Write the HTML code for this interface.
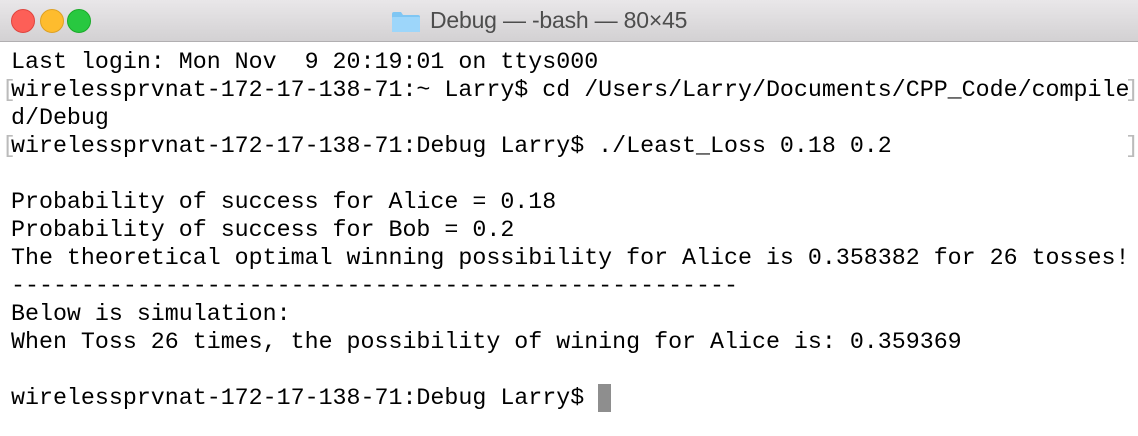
<!DOCTYPE html>
<html><head><style>
html,body{margin:0;padding:0;width:1138px;height:436px;overflow:hidden;background:#fff}
.tb{position:absolute;left:0;top:0;width:1138px;height:41px;background:linear-gradient(#e9e7e9,#d3d1d3);border-bottom:1px solid #b1afb1}
.dot{position:absolute;top:9px;width:24px;height:24px;border-radius:50%}
.title{position:absolute;top:7px;left:430px;font:23px "Liberation Sans",sans-serif;color:#4d4d4d;letter-spacing:-0.2px}
.folder{position:absolute;left:391px;top:11px;width:30px;height:22px}
pre{position:absolute;left:11px;top:48px;margin:0;font:23.3px/28px "Liberation Mono",monospace;color:#000;letter-spacing:0}
.br{position:absolute;font:23px/28px "Liberation Mono",monospace;color:#bbb}
.cur{position:absolute;left:598px;top:384px;width:13px;height:28px;background:#8e8e8e}
</style></head><body>
<div class="tb">
<div class="dot" style="left:11px;background:#fd5f57;border:1px solid #e0443e;width:22px;height:22px"></div>
<div class="dot" style="left:40px;background:#febc2e;border:1px solid #dea123;width:22px;height:22px"></div>
<div class="dot" style="left:67px;background:#28c840;border:1px solid #1aab29;width:22px;height:22px"></div>
<svg class="folder" viewBox="0 0 30 22"><path d="M1 3 Q1 1 3 1 L10 1 L12 4 L27 4 Q29 4 29 6 L29 20 Q29 21 28 21 L2 21 Q1 21 1 20Z" fill="#7fc6f3"/><rect x="1" y="6" width="28" height="15" rx="1" fill="#9dd6fa"/></svg>
<div class="title">Debug — -bash — 80×45</div>
</div>
<span class="br" style="left:2px;top:76px">[</span>
<span class="br" style="left:1125px;top:76px">]</span>
<span class="br" style="left:2px;top:132px">[</span>
<span class="br" style="left:1125px;top:132px">]</span>
<pre>Last login: Mon Nov  9 20:19:01 on ttys000
wirelessprvnat-172-17-138-71:~ Larry$ cd /Users/Larry/Documents/CPP_Code/compile
d/Debug
wirelessprvnat-172-17-138-71:Debug Larry$ ./Least_Loss 0.18 0.2

Probability of success for Alice = 0.18
Probability of success for Bob = 0.2
The theoretical optimal winning possibility for Alice is 0.358382 for 26 tosses!
----------------------------------------------------
Below is simulation:
When Toss 26 times, the possibility of wining for Alice is: 0.359369

wirelessprvnat-172-17-138-71:Debug Larry$ </pre>
<div class="cur"></div>
</body></html>
